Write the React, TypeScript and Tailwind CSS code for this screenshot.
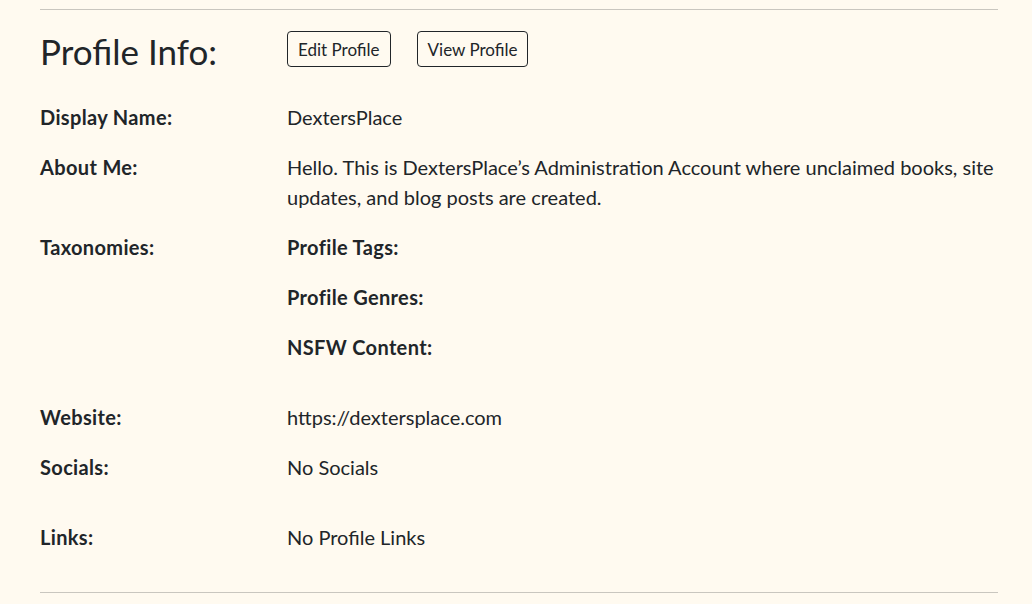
const font = { fontFamily: "Lato, 'Noto Sans', sans-serif" };

const Row = ({
  label,
  children,
  extra = false,
}: {
  label: string;
  children: React.ReactNode;
  extra?: boolean;
}) => (
  <div className={`flex ${extra ? "mb-[40px]" : "mb-[20px]"}`}>
    <div className="w-[247px] shrink-0 font-bold tracking-[0.35px]">{label}</div>
    <div className="flex-1">{children}</div>
  </div>
);

export default function App() {
  return (
    <div
      className="min-h-screen bg-[#fffaf0] pl-[40px] pr-[34px] pt-[9px] pb-[11px] text-[20px] leading-[30px] text-[#212529]"
      style={font}
    >
      <hr className="border-0 border-t border-[#c9c6bf]" />

      <div className="mt-[18px] flex items-start">
        <h2 className="w-[247px] shrink-0 text-[35px] leading-[46px] font-normal">
          Profile Info:
        </h2>
        <div className="mt-[3px] flex gap-[26px]">
          <button className="h-[36px] rounded-[4px] border border-[#212529] px-[10px] text-[17px] leading-none">
            Edit Profile
          </button>
          <button className="h-[36px] rounded-[4px] border border-[#212529] px-[10px] text-[17px] leading-none">
            View Profile
          </button>
        </div>
      </div>

      <div className="mt-[28px]">
        <Row label="Display Name:">DextersPlace</Row>
        <Row label="About Me:">
          Hello. This is DextersPlace’s Administration Account where unclaimed
          books, site updates, and blog posts are created.
        </Row>
        <Row label="Taxonomies:" extra>
          <div className="flex flex-col gap-[20px] font-bold tracking-[0.35px]">
            <div>Profile Tags:</div>
            <div>Profile Genres:</div>
            <div>NSFW Content:</div>
          </div>
        </Row>
        <Row label="Website:">https://dextersplace.com</Row>
        <Row label="Socials:" extra>
          No Socials
        </Row>
        <div className="flex">
          <div className="w-[247px] shrink-0 font-bold tracking-[0.35px]">Links:</div>
          <div className="flex-1">No Profile Links</div>
        </div>
      </div>

      <hr className="mt-[40px] border-0 border-t border-[#c9c6bf]" />
    </div>
  );
}
